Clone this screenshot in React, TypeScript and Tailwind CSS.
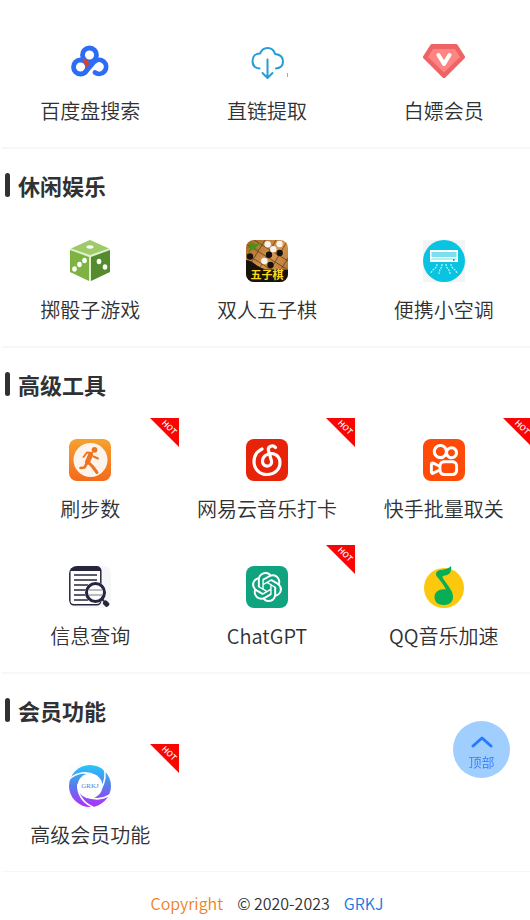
import React from "react";
import { SiKuaishou, SiOpenai } from "react-icons/si";

type Tool = { name: string; icon: React.ReactNode; hot?: boolean };
type Section = { title?: string; tools: Tool[] };

const sections: Section[] = [
  {
    tools: [
      { name: "百度盘搜索", icon: <PanIcon /> },
      { name: "直链提取", icon: <CloudIcon /> },
      { name: "白嫖会员", icon: <VipIcon /> },
    ],
  },
  {
    title: "休闲娱乐",
    tools: [
      { name: "掷骰子游戏", icon: <DiceIcon /> },
      { name: "双人五子棋", icon: <GomokuIcon /> },
      { name: "便携小空调", icon: <AirIcon /> },
    ],
  },
  {
    title: "高级工具",
    tools: [
      { name: "刷步数", icon: <StepsIcon />, hot: true },
      { name: "网易云音乐打卡", icon: <NeteaseIcon />, hot: true },
      {
        name: "快手批量取关",
        hot: true,
        icon: (
          <span className="flex size-[42px] items-center justify-center rounded-lg bg-[#ff4a08]">
            <SiKuaishou className="size-8 text-white" />
          </span>
        ),
      },
      { name: "信息查询", icon: <SearchDocIcon /> },
      {
        name: "ChatGPT",
        hot: true,
        icon: (
          <span className="flex size-[42px] items-center justify-center rounded-lg bg-[#10a37f]">
            <SiOpenai className="size-[30px] text-white" />
          </span>
        ),
      },
      { name: "QQ音乐加速", icon: <QQMusicIcon /> },
    ],
  },
  {
    title: "会员功能",
    tools: [{ name: "高级会员功能", icon: <GrkjIcon />, hot: true }],
  },
];

export default function App() {
  return (
    <div className="overflow-hidden bg-white font-['Noto_Sans_CJK_SC_DemiLight','Noto_Sans_CJK_SC',sans-serif] text-[#303133]">
      <div className="-mr-0.5 ml-0.5 pt-5">
        <main>
          {sections.map((s, i) => (
            <section key={i} className="border-b-2 border-[#f7f7f7] last:border-b">
              {s.title && (
                <h2 className="flex h-[70px] items-center gap-2 pl-[3px] pt-0.5 font-['Noto_Sans_CJK_SC',sans-serif] text-[22px] font-bold leading-8">
                  <span className="h-6 w-[5px] rounded-full bg-[#303133]" />
                  {s.title}
                </h2>
              )}
              <div className="grid grid-cols-3">
                {s.tools.map((t) => (
                  <ToolCell key={t.name} tool={t} />
                ))}
              </div>
            </section>
          ))}
        </main>
        <footer className="flex justify-center gap-3.5 pb-1 pt-[19px] text-[16px] leading-6">
          <span className="text-[#f0821e]">Copyright</span>
          <span>© 2020-2023</span>
          <a href="#" className="text-[#1677e0]">GRKJ</a>
        </footer>
      </div>
      <button
        type="button"
        onClick={() => window.scrollTo({ top: 0, behavior: "smooth" })}
        className="fixed bottom-[142px] right-5 flex size-[57px] flex-col items-center rounded-full bg-[#a0cfff] pt-[15px] text-[13px] leading-4 text-[#2f7ef7]"
      >
        <svg viewBox="0 0 22 12" className="mb-1.5 h-3 w-[22px] shrink-0" fill="none" stroke="#2979ff" strokeWidth="3" strokeLinecap="round" strokeLinejoin="round">
          <path d="M2 10 11 2l9 8" />
        </svg>
        顶部
      </button>
    </div>
  );
}

function ToolCell({ tool }: { tool: Tool }) {
  return (
    <a href="#" className="relative flex h-[127px] flex-col items-center pt-[21px]">
      {tool.icon}
      <span className="mt-3.5 whitespace-nowrap text-[20px] leading-7">{tool.name}</span>
      {tool.hot && <HotBadge />}
    </a>
  );
}

function HotBadge() {
  return (
    <svg viewBox="0 0 29 29" className="absolute right-0 top-0 size-[29px]">
      <path d="M0 0h29v29z" fill="#fa0404" />
      <text x="19" y="12" transform="rotate(45 19 9.500)" textAnchor="middle" fontSize="8" fontWeight="500" fill="#fff" fontFamily="Noto Sans CJK SC, sans-serif">
        HOT
      </text>
    </svg>
  );
}

function PanIcon() {
  return (
    <svg viewBox="0 0 42 42" className="size-[42px]" fill="none" stroke="#2d6df6" strokeWidth="4.800" strokeLinecap="round">
      <circle cx="20.500" cy="14" r="7" />
      <circle cx="11.500" cy="26" r="7" />
      <path d="M16 31.500 25 21a7 7 0 1 1 1 10.500" />
      <path d="m12.500 18 4-.5 4 5-4 5c0-4-1.500-7-4-9.500z" fill="#d8432f" stroke="none" />
    </svg>
  );
}

function CloudIcon() {
  return (
    <svg viewBox="0 0 42 42" className="size-[42px]" fill="none" stroke="#279cd8" strokeWidth="2" strokeLinecap="round" strokeLinejoin="round">
      <path d="M13.500 27.500C9 27 6.500 24 6.500 20c0-4.500 3-7.500 7.500-7.500C15.500 9 18 7 21.500 7s6.500 2 7.500 6c5 .5 8 3 8 7.500 0 4-2.500 6.500-7 7" />
      <path d="M21.500 18.500v18M16.500 32l5 5 5-5" />
      <path d="M41.500 32v4" stroke="#aaa" strokeWidth="1" strokeLinecap="butt" />
    </svg>
  );
}

function VipIcon() {
  return (
    <svg viewBox="0 0 42 42" className="size-[42px]" strokeLinejoin="round">
      <path d="M9 5h24l7 11-19 19L2 16z" fill="#ee6366" stroke="#ee6366" strokeWidth="4" />
      <path d="M10 8h22l5 8-16 15.500L5 16z" fill="#ff8582" />
      <path d="m15.500 14 5.500 9 5.500-9" fill="none" stroke="#fff" strokeWidth="4" strokeLinecap="round" />
    </svg>
  );
}

function DiceIcon() {
  return (
    <svg viewBox="0 0 42 42" className="size-[42px]">
      <path d="M21 0 41 9v23L21 41 1 32V9z" fill="#e0f0cf" />
      <path d="M21 0 40 8.500 21 15 2 8.500z" fill="#9dcb68" />
      <path d="m1 10 19 7v24L1 32z" fill="#7cb342" />
      <path d="m41 10-19 7v24l19-9z" fill="#558b2f" />
      <g fill="#fff">
        <ellipse cx="21" cy="7" rx="3.500" ry="1.700" />
        <ellipse cx="15.500" cy="20.500" rx="2.300" ry="2.800" />
        <ellipse cx="10.500" cy="24.500" rx="2.300" ry="2.800" />
        <ellipse cx="5.500" cy="29" rx="2.300" ry="2.800" />
        <ellipse cx="30" cy="21.500" rx="2.300" ry="2.800" />
        <ellipse cx="36" cy="27" rx="2.300" ry="2.800" />
      </g>
    </svg>
  );
}

function GomokuIcon() {
  return (
    <svg viewBox="0 0 42 42" className="size-[42px] rounded-lg">
      <defs>
        <linearGradient id="board" x1="0" y1="0" x2="1" y2="1">
          <stop offset="0" stopColor="#a86626" />
          <stop offset=".5" stopColor="#d5964e" />
          <stop offset="1" stopColor="#a86b30" />
        </linearGradient>
      </defs>
      <path fill="url(#board)" d="M0 0h42v42H0z" />
      <path d="m8 0 34 21M0 4l42 26M0 14l32 20M19 0 3 26M30 0 12 31M42 0 22 34M42 18 31 36" stroke="#62401c" strokeWidth=".8" />
      <path d="M0 20c7 0 10 7 19 9 9 1 15 0 23 1v12H0z" fill="#18120d" />
      <path d="m0 8 16-6-7 6 6 2-8-1-5 4 2-5zM3 2l9 3-8 2z" fill="#4f8d19" />
      <g fill="#f6f4ef">
        <circle cx="21.700" cy="4.200" r="3.200" />
        <circle cx="33.500" cy="4" r="3.200" />
        <circle cx="27.300" cy="9.300" r="3.200" />
        <circle cx="18.300" cy="21" r="3.200" />
      </g>
      <g fill="#14110f">
        <circle cx="4" cy="16.500" r="3.200" />
        <circle cx="23" cy="14.700" r="3.200" />
        <circle cx="33.700" cy="13" r="3.200" />
        <circle cx="24.500" cy="25" r="3.200" />
      </g>
      <text x="21" y="39" textAnchor="middle" fontSize="11" fontWeight="700" fill="#ffd91c" fontFamily="Noto Sans CJK SC, sans-serif">
        五子棋
      </text>
    </svg>
  );
}

function AirIcon() {
  return (
    <svg viewBox="0 0 42 42" className="size-[42px] bg-[#f4f4f4]">
      <circle cx="21" cy="21" r="21" fill="#08c4e1" />
      <path d="M7 10h28v12H7z" fill="#fff" />
      <path d="M8.500 12h25v5h-25z" fill="#7bdfed" />
      <path d="M8.500 18h25v2h-25z" fill="#b8edf4" />
      <path d="M30 19h1.500v2H30z" fill="#08a4be" />
      <path d="M14 24c0 5-5 5-6 9M19 24c0 5-3 5-3 10M23 24c0 5 4 5 4 10M28 24c0 5 5 5 6 9" fill="none" stroke="#c5f3f9" strokeWidth="1.200" strokeDasharray="2 1" />
    </svg>
  );
}

function StepsIcon() {
  return (
    <svg viewBox="0 0 42 42" className="size-[42px] rounded-lg">
      <defs>
        <linearGradient id="steps" x1="0" y1="0" x2="0" y2="1">
          <stop offset="0" stopColor="#f7a12e" />
          <stop offset="1" stopColor="#f36a1c" />
        </linearGradient>
      </defs>
      <path fill="url(#steps)" d="M0 0h42v42H0z" />
      <circle cx="21.500" cy="21" r="17" fill="#fdf4ee" />
      <g fill="none" stroke="#ed7420" strokeWidth="2" strokeLinecap="round" strokeLinejoin="round">
        <circle cx="25.500" cy="10.800" r="2.900" fill="#ed7420" stroke="none" />
        <path d="m14.500 18 3.500-4.500 5 .5M24.500 17.500l4.500 2" />
        <path d="m21.500 16-3 7" strokeWidth="5" />
        <path d="m18 24-2.500 4.500-4 .5" strokeWidth="2.600" />
        <path d="m20 24 3.500 3.500 4.500 6" strokeWidth="3" />
      </g>
    </svg>
  );
}

function NeteaseIcon() {
  return (
    <svg viewBox="0 0 42 42" className="size-[42px] rounded-lg bg-[#e72309]" fill="none" stroke="#fff" strokeWidth="3.200" strokeLinecap="round">
      <path d="M29.500 8.500C27 5.500 21.500 7 22.500 11.500L25.500 22c1 6.500-9 7-9 .5 0-5 4-8 9-8 5.500.2 8.500 4.500 8.500 9 0 7-5.500 12-13 12S8 30 8 22.500C8 17 11 12.500 16 10" />
    </svg>
  );
}

function SearchDocIcon() {
  return (
    <svg viewBox="0 0 42 42" className="size-[42px] rounded-lg bg-[#f6f6f8]" fill="none" stroke="#25263d">
      <rect x=".8" y=".8" width="31" height="38" rx="4" fill="#fff" strokeWidth="1.500" />
      <path d="M1 5V4a4 4 0 0 1 4-3h23a4 4 0 0 1 4 3v1z" fill="#25263d" stroke="none" />
      <path d="M5 9h23M5 14h23M5 19h14M5 24h12M5 29h12M5 34h14" strokeWidth="1.500" />
      <circle cx="26.500" cy="26.500" r="10.500" fill="#fff" stroke="none" />
      <path d="M20 24h13M20 29h13" stroke="#777884" />
      <circle cx="26.500" cy="26.500" r="9" strokeWidth="3" />
      <path d="m33 33 2 2" strokeWidth="2" />
      <path d="m36.500 37 1.500 1.500" strokeWidth="5" strokeLinecap="round" />
    </svg>
  );
}

function QQMusicIcon() {
  return (
    <svg viewBox="0 0 42 42" className="size-[42px]">
      <circle cx="21" cy="22" r="20" fill="#fbc80d" />
      <path d="M28 0c.8 4-.5 8-4 9-3 .6-4.500 1-4.500 2 0 2 7 9 9.500 15 3 8-1 13-8 13-6 0-9.500-3-9.500-8 0-5.500 5.500-8.500 11.500-7.500-2-4.500-7-10.500-9.500-13.500-1.500-3 .5-5.500 4-6 5-1 7.500-1 10.500-4z" fill="#08ae55" />
    </svg>
  );
}

function GrkjIcon() {
  return (
    <svg viewBox="0 0 42 42" className="size-[42px] bg-[#fcfcfd]">
      <defs>
        <linearGradient id="grkj" x1="0" y1="0" x2="0" y2="42" gradientUnits="userSpaceOnUse">
          <stop offset="0" stopColor="#25c8fa" />
          <stop offset=".5" stopColor="#587bec" />
          <stop offset="1" stopColor="#b32cfb" />
        </linearGradient>
      </defs>
      <circle cx="21" cy="21" r="21" fill="url(#grkj)" />
      <circle cx="21" cy="21" r="12.500" fill="#fff" />
      <g fill="none" stroke="#fff" strokeWidth="1.600">
        <path d="M0 14.500C8 7 18 6 27 11" />
        <path d="M35 2c2 7 1 15-3 22" />
        <path d="M42 29c-8 6-17 6-26 2" />
        <path d="M24 42C14 38 8 29 9 19" />
      </g>
      <text x="21" y="23" textAnchor="middle" fontSize="7" fill="#4c84d8" fontFamily="Liberation Serif, serif">
        GRKJ
      </text>
    </svg>
  );
}
